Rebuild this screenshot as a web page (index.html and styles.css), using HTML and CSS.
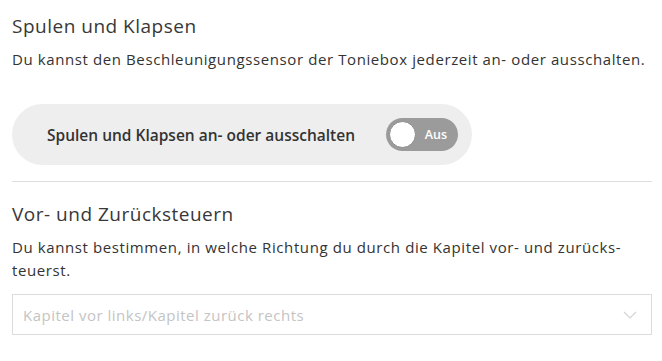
FILE: index.html
```html
<!DOCTYPE html>
<html lang="de">
<head>
<meta charset="utf-8">
<link rel="stylesheet" href="styles.css">
</head>
<body>
<div class="page">
  <section class="block">
    <h2 class="title">Spulen und Klapsen</h2>
    <p class="desc">Du kannst den Beschleunigungssensor der Toniebox jederzeit an- oder ausschalten.</p>
    <div class="pill">
      <span class="pill-label">Spulen und Klapsen an- oder ausschalten</span>
      <span class="switch"><span class="knob"></span><span class="switch-text">Aus</span></span>
    </div>
  </section>
  <hr class="divider">
  <section class="block">
    <h2 class="title title-2">Vor- und Zurücksteuern</h2>
    <p class="desc">Du kannst bestimmen, in welche Richtung du durch die Kapitel vor- und zurücks-<br>teuerst.</p>
    <div class="select">
      <span class="select-text">Kapitel vor links/Kapitel zurück rechts</span>
      <svg class="chev" width="14" height="8" viewBox="0 0 14 8"><path d="M1 1 L7 7 L13 1" fill="none" stroke="#d4d4d4" stroke-width="1.2"/></svg>
    </div>
  </section>
</div>
</body>
</html>
```
FILE: styles.css
```css
html, body { margin: 0; padding: 0; background: #fff; }
body { font-family: "Open Sans", sans-serif; color: #333; }
.page { padding: 13px 10px 0 12px; }
.title { margin: 0; font-size: 19px; font-weight: 400; line-height: 26px; letter-spacing: 0.5px; color: #383838; }
.desc { margin: 9px 0 0; font-size: 15px; line-height: 23px; letter-spacing: 0.6px; color: #333; }
.pill { display: inline-flex; align-items: center; margin-top: 33px; height: 61px; padding: 0 14px 0 35px; background: #eeeeee; border-radius: 31px; gap: 31px; }
.pill-label { font-size: 15.5px; font-weight: 600; color: #333; }
.switch { position: relative; display: flex; align-items: center; justify-content: flex-end; width: 72px; height: 33px; box-sizing: border-box; background: #9b9b9b; border-radius: 17px; padding-right: 11px; }
.knob { position: absolute; left: 3px; top: 3px; width: 27px; height: 27px; border-radius: 50%; background: #fff; border: 1px solid #8a8a8a; box-sizing: border-box; }
.switch-text { font-size: 12.5px; font-weight: 600; color: #fff; }
.divider { border: 0; border-top: 1px solid #dedede; margin: 16px 0 0; }
.title-2 { margin-top: 19px; }
.select { display: flex; align-items: center; justify-content: space-between; margin-top: 12px; height: 41px; box-sizing: border-box; border: 1px solid #dcdcdc; padding: 0 14px 0 10px; }
.select-text { font-size: 15px; letter-spacing: 0.5px; color: #c4c4c4; }
.chev { display: block; }
```
